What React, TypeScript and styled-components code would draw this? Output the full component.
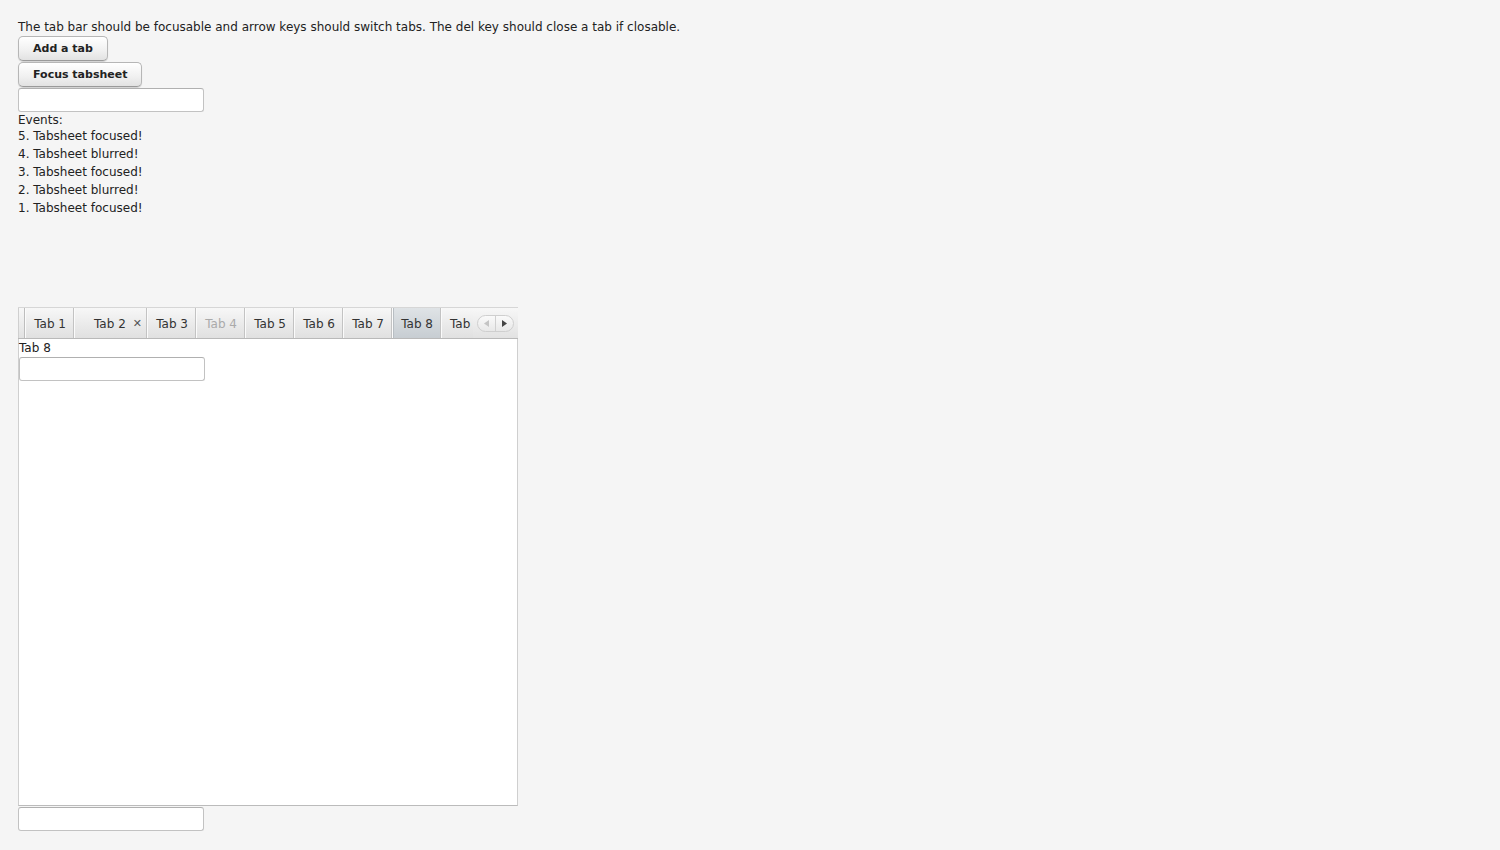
import styled, { createGlobalStyle } from "styled-components";

const Global = createGlobalStyle`
  html, body {
    margin: 0;
    background: #f5f5f5;
    font-family: "DejaVu Sans", "Liberation Sans", sans-serif;
    font-size: 12px;
    color: #222;
  }
`;

const Page = styled.div`
  padding: 18px 18px 0 18px;
  display: flex;
  flex-direction: column;
  align-items: flex-start;
`;

const Intro = styled.div`
  line-height: 18px;
  height: 18px;
`;

const Button = styled.button`
  font-family: "DejaVu Sans", sans-serif;
  font-size: 11px;
  font-weight: bold;
  color: #222;
  height: 25px;
  padding: 0 14px;
  margin-bottom: 1px;
  border: 1px solid #b6b6b6;
  border-bottom-color: #9a9a9a;
  border-radius: 5px;
  background: linear-gradient(#ffffff, #f0f0f0 60%, #e2e2e2);
  box-shadow: 0 1px 1px rgba(0, 0, 0, 0.15);
`;

const Field = styled.input<{ $top?: number }>`
  box-sizing: border-box;
  width: 186px;
  height: 24px;
  margin: ${(p) => p.$top ?? 0}px 0 0 0;
  border: 1px solid #c2c2c2;
  border-top-color: #b0b0b0;
  border-radius: 3px;
  background: #fff;
`;

const Events = styled.div`
  margin-top: 1px;
  line-height: 18px;
`;

const EventsTitle = styled.div`
  line-height: 14px;
`;

const Sheet = styled.div`
  margin-top: 90px;
  width: 500px;
  display: flex;
  flex-direction: column;
`;

const Bar = styled.div`
  display: flex;
  align-items: stretch;
  height: 32px;
  box-sizing: border-box;
  border-top: 1px solid #d6d6d6;
  border-bottom: 1px solid #b9b9b9;
  background: linear-gradient(#f7f7f7, #e2e2e2);
`;

const TabStrip = styled.div`
  display: flex;
  width: 455px;
  flex: none;
  overflow: hidden;
`;

const Lead = styled.div`
  width: 5px;
  flex: none;
  border-left: 1px solid #cfcfcf;
  border-right: 1px solid #bdbdbd;
`;

const Tab = styled.div<{ $sel?: boolean; $off?: boolean; $close?: boolean; $w: number }>`
  flex: none;
  box-sizing: border-box;
  width: ${(p) => p.$w}px;
  display: flex;
  align-items: center;
  justify-content: flex-end;
  padding: 1px ${(p) => (p.$close ? 4 : 7)}px 0 0;
  color: ${(p) => (p.$off ? "#aaa" : "#333")};
  border-right: 1px solid #c3c3c3;
  border-left: 1px solid #fbfbfb;
  background: ${(p) =>
    p.$sel
      ? "linear-gradient(#dfe3e6, #c7cdd2)"
      : "linear-gradient(#f7f7f7, #e0e0e0)"};
  box-shadow: ${(p) => (p.$sel ? "inset 1px 0 0 #b8bec3" : "none")};
  white-space: nowrap;
`;

const Clip = styled.div`
  flex: none;
  width: 35px;
  box-sizing: border-box;
  overflow: hidden;
  padding: 1px 0 0 8px;
  display: flex;
  align-items: center;
  color: #333;
  white-space: nowrap;
  border-left: 1px solid #fbfbfb;
  border-right: 1px solid #c3c3c3;
  background: linear-gradient(#f7f7f7, #e0e0e0);
`;

const Close = styled.span`
  margin-left: 7px;
  font-size: 11px;
  color: #555;
  font-weight: bold;
`;

const Scroller = styled.div`
  margin: 7px 0 0 4px;
  display: flex;
  width: 37px;
  height: 17px;
  box-sizing: border-box;
  border: 1px solid #cfcfcf;
  border-radius: 9px;
  background: linear-gradient(#fafafa, #e8e8e8);
  overflow: hidden;
`;

const Arrow = styled.div<{ $on?: boolean; $first?: boolean }>`
  flex: 1;
  display: flex;
  align-items: center;
  justify-content: center;
  border-right: ${(p) => (p.$first ? "1px solid #d0d0d0" : "none")};
  color: ${(p) => (p.$on ? "#444" : "#c4c4c4")};
`;

const Content = styled.div`
  height: 465px;
  background: #fff;
  border: 1px solid #cfcfcf;
  border-top: none;
  border-bottom-color: #bbb;
  padding-top: 1px;
`;

const Label = styled.div`
  line-height: 16px;
`;

const tabs = [
  { t: "Tab 1", w: 49 },
  { t: "Tab 2", w: 73, close: true },
  { t: "Tab 3", w: 49 },
  { t: "Tab 4", w: 49, off: true },
  { t: "Tab 5", w: 49 },
  { t: "Tab 6", w: 49 },
  { t: "Tab 7", w: 49 },
  { t: "Tab 8", w: 49, sel: true },
];

export default function App() {
  return (
    <Page>
      <Global />
      <Intro>
        The tab bar should be focusable and arrow keys should switch tabs. The
        del key should close a tab if closable.
      </Intro>
      <Button>Add a tab</Button>
      <Button>Focus tabsheet</Button>
      <Field />
      <Events>
        <EventsTitle>Events:</EventsTitle>
        <div>5. Tabsheet focused!</div>
        <div>4. Tabsheet blurred!</div>
        <div>3. Tabsheet focused!</div>
        <div>2. Tabsheet blurred!</div>
        <div>1. Tabsheet focused!</div>
      </Events>
      <Sheet>
        <Bar>
          <TabStrip>
            <Lead />
            {tabs.map((x) => (
              <Tab key={x.t} $w={x.w} $sel={x.sel} $off={x.off} $close={x.close}>
                {x.t}
                {x.close && <Close>✕</Close>}
              </Tab>
            ))}
            <Clip>Tab</Clip>
          </TabStrip>
          <Scroller>
            <Arrow $first>
              <svg width="5" height="7" viewBox="0 0 5 7">
                <path d="M5 0 L0 3.5 L5 7 Z" fill="currentColor" />
              </svg>
            </Arrow>
            <Arrow $on>
              <svg width="5" height="7" viewBox="0 0 5 7">
                <path d="M0 0 L5 3.5 L0 7 Z" fill="currentColor" />
              </svg>
            </Arrow>
          </Scroller>
        </Bar>
        <Content>
          <Label>Tab 8</Label>
          <Field $top={1} />
        </Content>
      </Sheet>
      <Field $top={1} />
    </Page>
  );
}
